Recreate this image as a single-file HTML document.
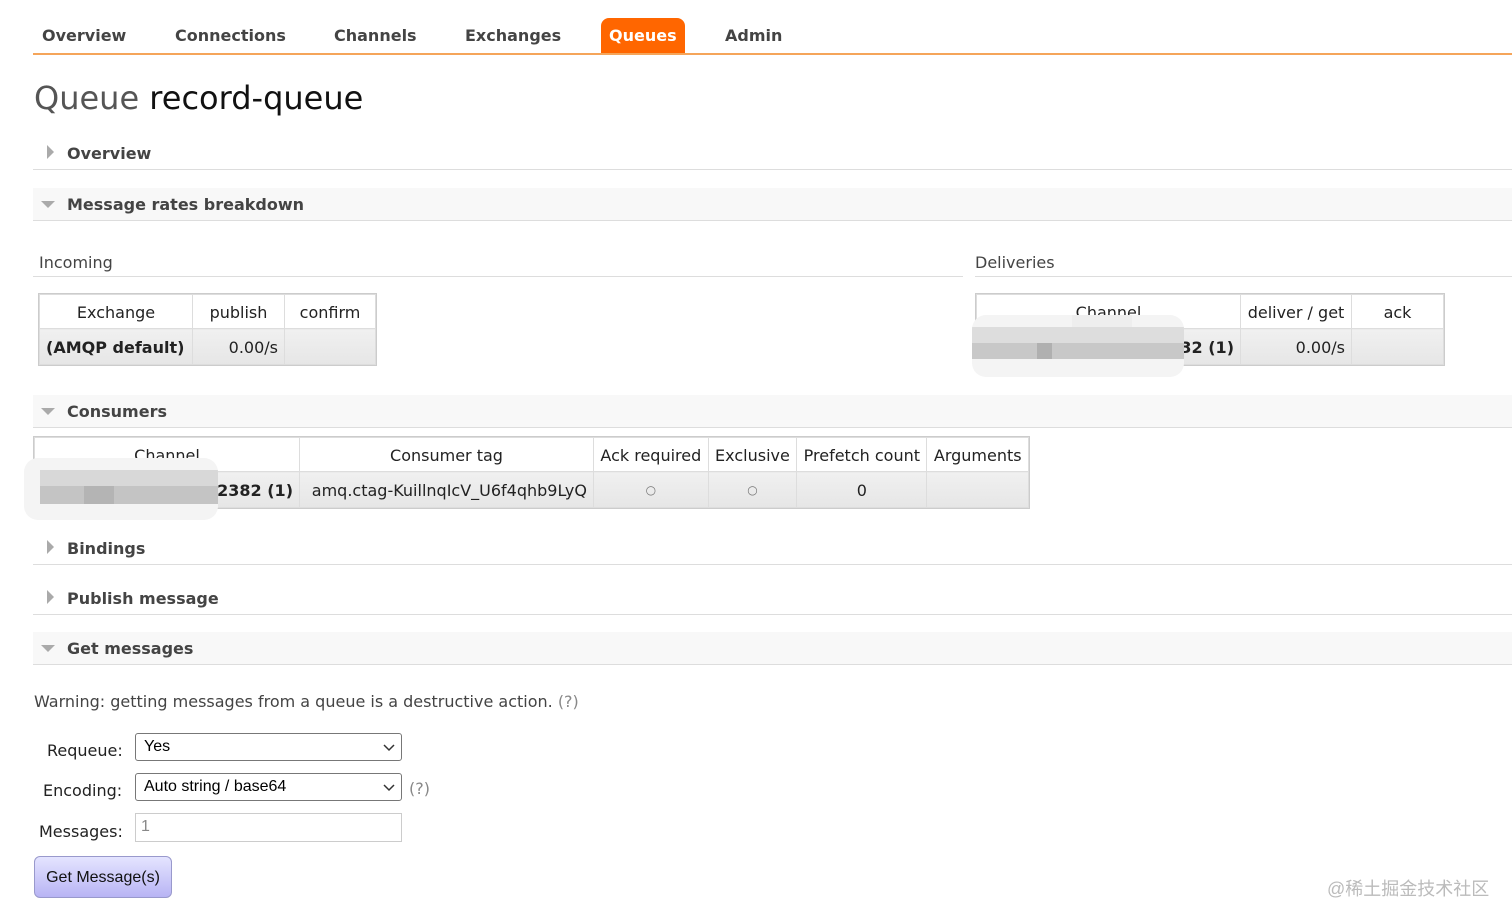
<!DOCTYPE html>
<html><head><meta charset="utf-8"><style>
*{margin:0;padding:0;box-sizing:border-box}
body{width:1512px;height:920px;background:#fff;position:relative;overflow:hidden;font-family:"DejaVu Sans","Liberation Sans",sans-serif;color:#333;font-size:16px}
.a{position:absolute;white-space:nowrap}
.nav{font-weight:bold;font-size:16px;color:#444;top:26px}
.sec{position:absolute;left:33px;right:0;height:33px;border-bottom:1px solid #ddd}
.sec.g{background:#f8f8f8}
.sec span{position:absolute;left:34px;top:7px;font-weight:bold;font-size:16px;color:#444}
.tri-r{position:absolute;left:14px;top:8px;width:0;height:0;border-top:7px solid transparent;border-bottom:7px solid transparent;border-left:7px solid #aaa}
.tri-d{position:absolute;left:8px;top:13px;width:0;height:0;border-left:7px solid transparent;border-right:7px solid transparent;border-top:7px solid #aaa}
table{position:absolute;border-collapse:collapse;font-size:16px;color:#222}
td,th{border:1px solid #ddd;font-weight:normal;padding:0 6px;white-space:nowrap}
th{height:34px;background:#fff;text-align:center;padding-top:2px}
td{height:36px;background:linear-gradient(#f0f0f0,#e6e6e6);text-align:right;padding-top:1px}
table{outline:1px solid #ccc}
.blur{position:absolute;background:#ddd;border-radius:14px;overflow:hidden}
.blur i{position:absolute;display:block}
.inp{position:absolute;height:28px;border:1px solid #777;border-radius:3px;background:#fff;font-family:"Liberation Sans",sans-serif;font-size:16px;color:#000;padding-left:8px;line-height:26px}
.chev{position:absolute;right:6px;top:7px}
</style></head><body>
<div class="a nav" style="left:42px">Overview</div>
<div class="a nav" style="left:175px">Connections</div>
<div class="a nav" style="left:334px">Channels</div>
<div class="a nav" style="left:465px">Exchanges</div>
<div class="a" style="left:601px;top:18px;width:84px;height:36px;background:#f60;border-radius:8px 8px 0 0"></div>
<div class="a nav" style="left:609px;color:#fff">Queues</div>
<div class="a nav" style="left:725px">Admin</div>
<div class="a" style="left:33px;right:0;top:53px;height:2px;background:#f5a55a"></div>

<div class="a" style="left:34px;top:79px;font-size:32px;color:#555">Queue <span style="color:#111">record-queue</span></div>

<div class="sec" style="top:137px"><div class="tri-r"></div><span>Overview</span></div>
<div class="sec g" style="top:188px"><div class="tri-d"></div><span>Message rates breakdown</span></div>

<div class="a" style="left:39px;top:253px;color:#444">Incoming</div>
<div class="a" style="left:33px;top:276px;width:930px;height:1px;background:#ddd"></div>
<div class="a" style="left:975px;top:253px;color:#444">Deliveries</div>
<div class="a" style="left:975px;right:0;top:276px;height:1px;background:#ddd"></div>

<table style="left:39px;top:294px;width:337px">
<tr><th style="width:153px">Exchange</th><th style="width:92px">publish</th><th>confirm</th></tr>
<tr><td style="font-weight:bold;text-align:left">(AMQP default)</td><td>0.00/s</td><td></td></tr>
</table>

<table style="left:976px;top:294px;width:468px">
<tr><th style="width:264px">Channel</th><th style="width:111px">deliver / get</th><th>ack</th></tr>
<tr><td style="font-weight:bold">32 (1)</td><td>0.00/s</td><td></td></tr>
</table>
<div class="blur" style="left:972px;top:315px;width:212px;height:62px;background:#f4f4f4">
<i style="left:0;top:12px;width:212px;height:16px;background:#ddd"></i>
<i style="left:0;top:28px;width:212px;height:16px;background:#c8c8c8"></i>
<i style="left:65px;top:28px;width:15px;height:16px;background:#b0b0b0"></i>
<i style="left:100px;top:0;width:60px;height:12px;background:#eee"></i>
</div>

<div class="sec g" style="top:395px"><div class="tri-d"></div><span>Consumers</span></div>

<table style="left:34px;top:437px;width:995px">
<tr><th style="width:265px">Channel</th><th style="width:294px">Consumer tag</th><th>Ack required</th><th>Exclusive</th><th>Prefetch count</th><th>Arguments</th></tr>
<tr><td style="font-weight:bold">2382 (1)</td><td>amq.ctag-KuillnqIcV_U6f4qhb9LyQ</td><td style="text-align:center;font-size:12px;color:#777">○</td><td style="text-align:center;font-size:12px;color:#777">○</td><td style="text-align:center">0</td><td></td></tr>
</table>
<div class="blur" style="left:24px;top:458px;width:194px;height:62px;background:#f4f4f4">
<i style="left:16px;top:12px;width:178px;height:16px;background:#d8d8d8"></i>
<i style="left:16px;top:28px;width:178px;height:18px;background:#c4c4c4"></i>
<i style="left:60px;top:28px;width:30px;height:18px;background:#b4b4b4"></i>
</div>

<div class="sec" style="top:532px"><div class="tri-r"></div><span>Bindings</span></div>
<div class="sec" style="top:582px"><div class="tri-r"></div><span>Publish message</span></div>
<div class="sec g" style="top:632px"><div class="tri-d"></div><span>Get messages</span></div>

<div class="a" style="left:34px;top:692px;color:#444">Warning: getting messages from a queue is a destructive action. <span style="color:#888">(?)</span></div>

<div class="a" style="left:47px;top:741px;color:#222">Requeue:</div>
<div class="inp" style="left:135px;top:733px;width:267px">Yes<svg class="chev" width="12" height="12" viewBox="0 0 12 12"><path d="M1 4l5 5 5-5" fill="none" stroke="#333" stroke-width="1.5"/></svg></div>
<div class="a" style="left:43px;top:781px;color:#222">Encoding:</div>
<div class="inp" style="left:135px;top:773px;width:267px">Auto string / base64<svg class="chev" width="12" height="12" viewBox="0 0 12 12"><path d="M1 4l5 5 5-5" fill="none" stroke="#333" stroke-width="1.5"/></svg></div>
<div class="a" style="left:409px;top:779px;color:#888">(?)</div>
<div class="a" style="left:39px;top:822px;color:#222">Messages:</div>
<div class="inp" style="left:135px;top:813px;width:267px;height:29px;border-color:#ccc;border-radius:0;color:#888;padding-left:5px">1</div>

<div class="a" style="left:34px;top:856px;width:138px;height:42px;border:1px solid #99c;border-radius:6px;background:linear-gradient(#e4e4ff,#b8b4f4);font-family:'Liberation Sans',sans-serif;font-size:16px;color:#111;text-align:center;line-height:41px">Get Message(s)</div>

<div class="a" style="left:1327px;top:875px;font-family:'Liberation Sans','Noto Sans CJK SC',sans-serif;font-size:18px;color:#bbb">@稀土掘金技术社区</div>
</body></html>
